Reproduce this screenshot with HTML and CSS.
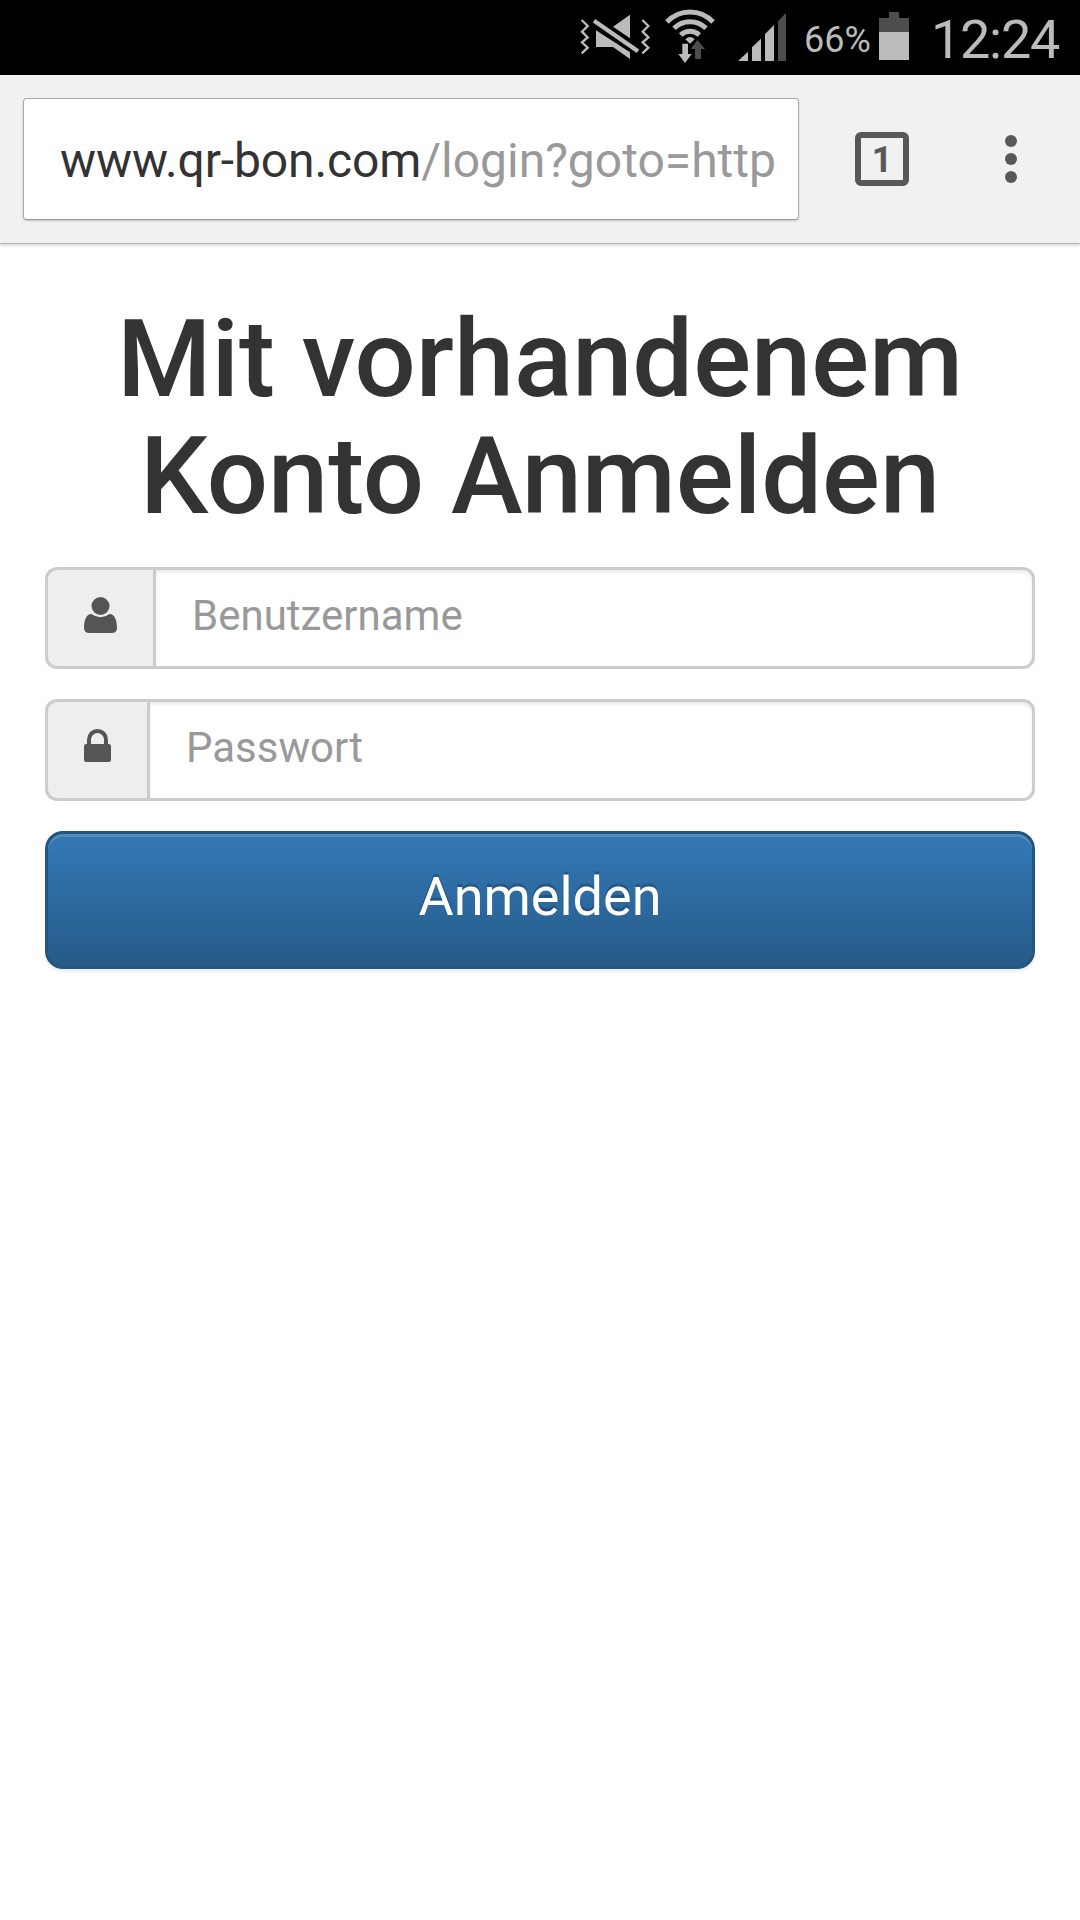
FILE: index.html
```html
<!DOCTYPE html>
<html lang="de">
<head>
<meta charset="utf-8">
<title>Anmelden</title>
<link rel="stylesheet" href="styles.css">
</head>
<body>
<div class="status-bar">
  <svg class="icon-mute" viewBox="30 0 210 225" width="70" height="75">
    <g fill="none" stroke="#bbb" stroke-width="7">
      <path d="M35 60L53 78L36 95L53 112L36 127L53 143L35 160"/>
      <path d="M217 60L235 78L218 95L235 112L218 127L235 143L217 160"/>
      <path d="M72 62L204 154" stroke-width="13"/>
    </g>
    <path fill="#bbb" d="M180 44V115L129 80ZM78 91L180 157V177L129 141H78Z"/>
  </svg>
  <svg class="icon-wifi" viewBox="285 0 150 225" width="50" height="75">
    <g fill="none" stroke="#bbb" stroke-width="15">
      <path d="M291 66A94 94 0 0 1 429 66"/>
      <path d="M312 85A68 68 0 0 1 408 85"/>
      <path d="M332 105A40 40 0 0 1 388 105"/>
    </g>
    <path fill="#bbb" d="M346 118Q360 104 374 118L360 131ZM337 131H354V162H365L345 189L325 162H337Z"/>
    <path fill="#4d4d4d" d="M382 120L405 147H393V177H375V147H362Z"/>
  </svg>
  <svg class="icon-signal" viewBox="504 0 144 225" width="48" height="75">
    <path fill="#bbb" d="M504 183L534 155V183ZM546 183V142L573 116V183ZM585 183V102L612 75V183Z"/>
    <path fill="#4d4d4d" d="M624 183V64L648 39V183Z"/>
  </svg>
  <span class="battery-level">66%</span>
  <svg class="icon-battery" viewBox="0 0 30 75" width="30" height="75">
    <path fill="#4d4d4d" d="M0 18H10V12H20V18H30V32H0Z"/>
    <path fill="#bbb" d="M0 32H30V60H0Z"/>
  </svg>
  <span class="clock">12:24</span>
</div>
<header class="toolbar">
  <div class="address"><span class="host">www.qr-bon.com</span><span class="path">/login?goto=http</span></div>
  <div class="tabs">1</div>
  <svg class="menu" viewBox="0 0 12 48" width="12" height="48" fill="#585858">
    <circle cx="6" cy="6" r="6"/><circle cx="6" cy="24" r="6"/><circle cx="6" cy="42" r="6"/>
  </svg>
</header>
<main class="login">
  <h1>Mit vorhandenem<br>Konto Anmelden</h1>
  <form>
    <label class="field">
      <span class="addon">
        <svg viewBox="0 0 33 36" width="33" height="36" fill="#555">
          <circle cx="16.5" cy="9" r="9"/>
          <path d="M7.4 17Q11.5 20.2 16.5 20.2T25.6 17C31 17 33 24 33 31Q33 36 27.500 36H5.500Q0 36 0 31C0 24 2 17 7.400 17Z"/>
        </svg>
      </span>
      <input type="text" placeholder="Benutzername">
    </label>
    <label class="field">
      <span class="addon">
        <svg viewBox="0 0 27 36" width="27" height="36" fill="#555">
          <path d="M5 16V10.500A8.500 8.500 0 0 1 22 10.500V16" fill="none" stroke="#555" stroke-width="4"/>
          <rect y="15" width="27" height="18" rx="2.200"/>
        </svg>
      </span>
      <input type="password" placeholder="Passwort">
    </label>
    <button type="button">Anmelden</button>
  </form>
</main>
</body>
</html>
```
FILE: styles.css
```css
* { box-sizing: border-box; }
body {
  margin: 0;
  min-height: 1920px;
  background: #fff;
  color: #333;
  font-family: Roboto, sans-serif;
}
svg { display: block; flex: none; }

.status-bar {
  display: flex;
  height: 75px;
  padding-left: 580px;
  background: #000;
  color: #bbb;
  white-space: nowrap;
}
.icon-wifi { margin-left: 15px; }
.icon-signal { margin-left: 23px; }
.battery-level {
  width: 75px;
  margin: 19px 0 0 18px;
  font-size: 36px;
  line-height: 42px;
}
.clock {
  margin: 8px 0 0 22px;
  font-size: 54px;
  line-height: 64px;
  letter-spacing: -1.3px;
}

.toolbar {
  display: flex;
  align-items: center;
  height: 169px;
  padding: 0 63px 0 23px;
  background: #f1f1f1;
  border-bottom: 1px solid #b3b3b3;
  box-shadow: 0 1px 4px rgba(0, 0, 0, .2);
}
.address {
  width: 776px;
  height: 122px;
  padding-left: 36px;
  background: #fff;
  border: 1px solid #aaa;
  border-bottom-color: #999;
  border-radius: 4px;
  box-shadow: 0 1px 2px rgba(0, 0, 0, .2);
  font-size: 48px;
  line-height: 124px;
  white-space: nowrap;
  overflow: hidden;
}
.host { letter-spacing: -.12px; }
.path { color: #999; }
.tabs {
  width: 54px;
  height: 54px;
  margin-left: 56px;
  border: 6px solid #585858;
  border-radius: 6px;
  color: #585858;
  font-size: 36px;
  font-weight: 700;
  line-height: 44px;
  text-align: center;
}
.menu { margin-left: 96px; }

.login { padding: 57px 45px 0; }
h1 {
  margin: 0 0 32px;
  font-size: 108px;
  font-weight: 500;
  line-height: 117px;
  text-align: center;
}
form {
  display: flex;
  flex-direction: column;
  gap: 30px;
}
.field {
  display: flex;
  height: 102px;
}
.addon {
  display: flex;
  align-items: center;
  padding: 0 36px 6px;
  background: #eee;
  border: 3px solid #ccc;
  border-right: 0;
  border-radius: 12px 0 0 12px;
}
input {
  flex: 1;
  min-width: 0;
  padding: 0 36px 6px;
  background: #fff;
  border: 3px solid #ccc;
  border-radius: 0 12px 12px 0;
  box-shadow: inset 0 3px 3px rgba(0, 0, 0, .075);
  font: 42px Roboto, sans-serif;
}
input::placeholder { color: #999; opacity: 1; }
button {
  height: 138px;
  padding: 0 0 8px;
  background: linear-gradient(#337ab7, #265a88) border-box;
  border: 3px solid #245580;
  border-radius: 18px;
  box-shadow: inset 0 3px 0 rgba(255, 255, 255, .15), 0 3px 3px rgba(0, 0, 0, .075);
  color: #fff;
  font: 54px Roboto, sans-serif;
  text-shadow: 0 -3px 0 rgba(0, 0, 0, .2);
}
```
